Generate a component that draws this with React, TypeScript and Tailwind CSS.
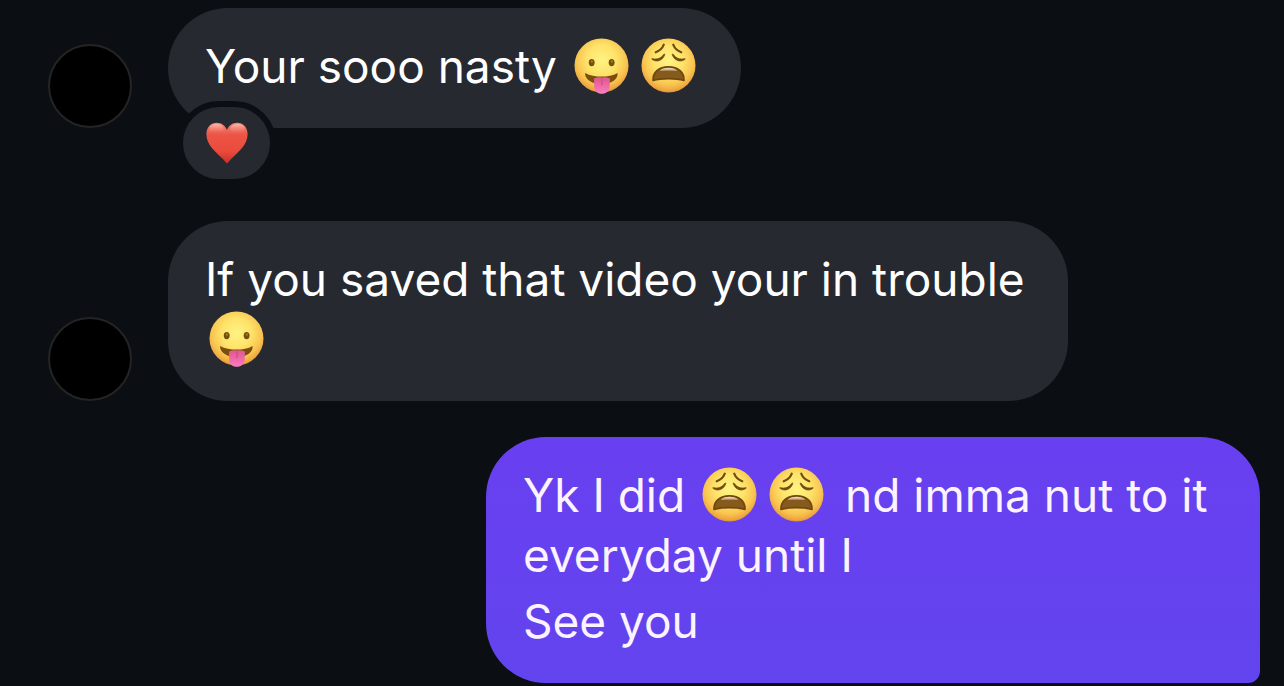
import type { ReactNode } from 'react';

const emojiClass = 'inline-block w-[55px] h-[55px] ml-1 mr-2 align-[-10px] overflow-visible';

function FaceGradient({ id }: { id: string }) {
  return (
    <defs>
      <radialGradient id={id} cx="50%" cy="40%" r="61%">
        <stop offset="0" stopColor="#fff383" />
        <stop offset="0.45" stopColor="#fee36a" />
        <stop offset="0.75" stopColor="#f9c551" />
        <stop offset="0.92" stopColor="#eea63f" />
        <stop offset="1" stopColor="#d98c38" />
      </radialGradient>
      <linearGradient id={`${id}-tongue`} x1="0" y1="0" x2="0" y2="1">
        <stop offset="0" stopColor="#e0578f" />
        <stop offset="1" stopColor="#fb7cc0" />
      </linearGradient>
      <linearGradient id={`${id}-teeth`} x1="0" y1="0" x2="0" y2="1">
        <stop offset="0" stopColor="#f1e6cf" />
        <stop offset="1" stopColor="#b08d58" />
      </linearGradient>
    </defs>
  );
}

function TongueFace({ id }: { id: string }) {
  return (
    <svg className={emojiClass} viewBox="0 0 56 56" role="img" aria-label="face with tongue">
      <FaceGradient id={id} />
      <circle cx="28" cy="28" r="27.5" fill={`url(#${id})`} />
      <ellipse cx="18" cy="25" rx="3" ry="3.7" fill="#74500f" />
      <ellipse cx="38.3" cy="25" rx="3" ry="3.7" fill="#74500f" />
      <ellipse cx="18.2" cy="24" rx="1.1" ry="1.3" fill="#a87a2a" />
      <ellipse cx="38.5" cy="24" rx="1.1" ry="1.3" fill="#a87a2a" />
      <path d="M11.3 35.6C16 38.4 22 39.3 28 39.3s12-.9 16.4-3.7c.6 6.5-6.4 11.2-16.4 11.2S10.7 42 11.3 35.6z" fill="#7a4e0c" />
      <path d="M20.4 41.2c2.6-.7 5.2-1.6 8-.8 2.8-.8 5.4.1 8.2.8l-.3 8.2c-.2 4.7-3.5 7.4-8 7.4s-7.6-2.7-7.7-7.4z" fill={`url(#${id}-tongue)`} />
      <path d="M28.4 42v5.6" stroke="#cf4a88" strokeWidth="1.2" strokeLinecap="round" />
    </svg>
  );
}

function WearyFace({ id }: { id: string }) {
  return (
    <svg className={emojiClass} viewBox="0 0 56 56" role="img" aria-label="weary face">
      <FaceGradient id={id} />
      <circle cx="28" cy="28" r="27.5" fill={`url(#${id})`} />
      <g fill="none" stroke="#6f4d0e" strokeWidth="2.2" strokeLinecap="round">
        <path d="M15 14.6c3.7-1.4 6.8-4.2 8.2-7.8" />
        <path d="M41 14.6c-3.7-1.4-6.8-4.2-8.2-7.8" />
      </g>
      <g fill="#6f4d0e" stroke="#6f4d0e" strokeWidth="0.8" strokeLinejoin="round">
        <path d="M11.5 21c4.8 1.3 9-.3 11.8-4.5.4-.6 1-.2.8.5-1.7 5.7-8.2 8.4-12.9 4.7-.4-.4-.2-.8.3-.7z" />
        <path d="M44.5 21c-4.8 1.3-9-.3-11.8-4.5-.4-.6-1-.2-.8.5 1.7 5.7 8.2 8.4 12.9 4.7.4-.4.2-.8-.3-.7z" />
      </g>
      <path
        d="M12.3 43.2C11.8 35 18 29.3 28 29.3S44.200 35 43.7 43.2c-4.6-1.4-10-1.8-15.7-1.8s-11.1.4-15.7 1.8z"
        fill="#855a1c"
        stroke="#70480d"
        strokeWidth="1.8"
        strokeLinejoin="round"
      />
      <path d="M19.6 32.6c2.2-1.5 5-2.2 8.4-2.2s6.2.7 8.4 2.2c.6.6.1 1.2-.8 1.1-5.2-.5-10-.5-15.2 0-.9.1-1.4-.5-.8-1.1z" fill={`url(#${id}-teeth)`} />
    </svg>
  );
}

function Heart() {
  return (
    <svg className="w-[42px] h-[42px]" viewBox="0 0 42 42" role="img" aria-label="red heart">
      <defs>
        <linearGradient id="heart" x1="0" y1="0" x2="0" y2="1">
          <stop offset="0" stopColor="#f58a7a" />
          <stop offset="0.3" stopColor="#ec5546" />
          <stop offset="0.7" stopColor="#ea4b3c" />
          <stop offset="1" stopColor="#c9302a" />
        </linearGradient>
        <linearGradient id="heart-shine" x1="0" y1="0" x2="0" y2="1">
          <stop offset="0" stopColor="#ffd9cf" stopOpacity="0.6" />
          <stop offset="1" stopColor="#ff8d78" stopOpacity="0" />
        </linearGradient>
      </defs>
      <path
        d="M21 41.2c-1 0-2.2-2.2-4.6-4.6C9.3 29.5.4 22.6.4 12.2.4 5.3 5 .8 10.8.8 15.4.8 19.3 3.6 21 8c1.7-4.4 5.6-7.2 10.2-7.2C37 .8 41.6 5.3 41.6 12.2c0 10.4-8.9 17.3-16 24.4-2.4 2.4-3.6 4.6-4.6 4.6z"
        fill="url(#heart)"
      />
      <ellipse cx="10.5" cy="6.5" rx="7" ry="4.5" fill="url(#heart-shine)" />
      <ellipse cx="31.5" cy="6.5" rx="7" ry="4.5" fill="url(#heart-shine)" />
    </svg>
  );
}

function Avatar() {
  return <div className="size-[84px] shrink-0 rounded-full bg-black border-2 border-[#242424]" />;
}

function Received({ children, reaction }: { children: ReactNode; reaction?: ReactNode }) {
  return (
    <div className={`flex items-end gap-9 ${reaction ? 'pb-[57px]' : ''}`}>
      <Avatar />
      <div className="relative max-w-[900px] rounded-[60px] bg-[#262930] px-[37px] pt-7 pb-8">
        <p>{children}</p>
        {reaction && (
          <button
            type="button"
            className="absolute left-[9px] -bottom-[57px] flex h-[84px] w-[99px] items-center justify-center rounded-[42px] border-6 border-[#0b0e12] bg-[#262930]"
          >
            {reaction}
          </button>
        )}
      </div>
    </div>
  );
}

export default function App() {
  return (
    <main className="flex min-h-screen flex-col gap-9 bg-[#0b0e12] pt-2 pr-6 pb-[3px] pl-12 font-['Inter',sans-serif] text-[46px] leading-[60px] text-white">
      <Received reaction={<Heart />}>
        Your sooo nasty <TongueFace id="tongue-1" />
        <WearyFace id="weary-1" />
      </Received>

      <Received>
        If you saved that video your in trouble <TongueFace id="tongue-2" />
      </Received>

      <div className="max-w-[774px] self-end rounded-[60px] rounded-br-xl bg-linear-to-b from-[#693ff0] to-[#6244ee] px-[37px] pt-7 pb-8 text-[#fbf3ff]">
        <p>
          Yk I did <WearyFace id="weary-2" />
          <WearyFace id="weary-3" /> nd imma nut to it everyday until I
        </p>
        <p className="mt-1.5">See you</p>
      </div>
    </main>
  );
}
